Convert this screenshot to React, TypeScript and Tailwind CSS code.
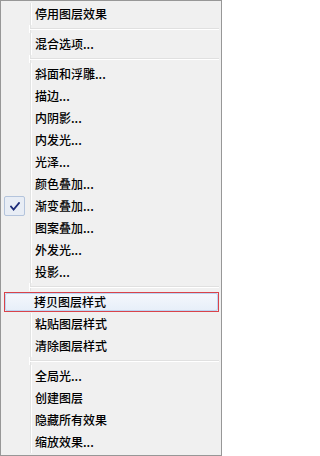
import React from "react";

type Entry = { t: "item"; label: string; checked?: boolean; hot?: boolean } | { t: "sep" };

const entries: Entry[] = [
  { t: "item", label: "停用图层效果" },
  { t: "sep" },
  { t: "item", label: "混合选项..." },
  { t: "sep" },
  { t: "item", label: "斜面和浮雕..." },
  { t: "item", label: "描边..." },
  { t: "item", label: "内阴影..." },
  { t: "item", label: "内发光..." },
  { t: "item", label: "光泽..." },
  { t: "item", label: "颜色叠加..." },
  { t: "item", label: "渐变叠加...", checked: true },
  { t: "item", label: "图案叠加..." },
  { t: "item", label: "外发光..." },
  { t: "item", label: "投影..." },
  { t: "sep" },
  { t: "item", label: "拷贝图层样式", hot: true },
  { t: "item", label: "粘贴图层样式" },
  { t: "item", label: "清除图层样式" },
  { t: "sep" },
  { t: "item", label: "全局光..." },
  { t: "item", label: "创建图层" },
  { t: "item", label: "隐藏所有效果" },
  { t: "item", label: "缩放效果..." },
];

function Check() {
  return (
    <div className="w-[21px] h-[20px] ml-[1px] border border-[#b4c4dc] rounded-[2px] bg-[#e8edf5] flex items-center justify-center">
      <svg width="10" height="9" viewBox="0 0 10 9">
        <path d="M1 4.5 L3.6 7.5 L9 1" fill="none" stroke="#1c2b78" strokeWidth="1.8" strokeLinecap="square" strokeLinejoin="miter" />
      </svg>
    </div>
  );
}

function Item({ label, checked }: { label: string; checked?: boolean }) {
  return (
    <div className="flex h-[22px]">
      <div className="w-[27px] shrink-0 flex items-center">{checked ? <Check /> : null}</div>
      <div className="flex-1 border-l border-l-[#e2e3e3]">
        <div className="h-full border-l border-l-white pl-[3px] flex items-center leading-none">{label}</div>
      </div>
    </div>
  );
}

function HotItem({ label }: { label: string }) {
  return (
    <div className="flex h-[22px] py-[1px] pl-[1px]">
      <div className="flex-1 border border-[#d9434a]">
        <div className="h-full border border-[#bcd5f2] rounded-[2px] bg-gradient-to-b from-[#f4f7fc] to-[#e7eff9] pl-[28px] flex items-center leading-none">
          {label}
        </div>
      </div>
    </div>
  );
}

function Sep() {
  return (
    <div className="flex h-[8px]">
      <div className="w-[27px] shrink-0" />
      <div className="flex-1 border-l border-l-[#e2e3e3]">
        <div className="h-full border-l border-l-white pt-[3px] -ml-[2px]">
          <div className="h-px bg-[#e0e0e0]" />
          <div className="h-px bg-white" />
        </div>
      </div>
    </div>
  );
}

export default function App() {
  return (
    <div className="w-[222px] h-[456px] border border-[#979797] bg-[#f0f0f0] p-[2px] flex flex-col text-[12px] font-medium text-black font-['Noto_Sans_CJK_SC','Noto_Sans',sans-serif]">
      {entries.map((e, i) =>
        e.t === "sep" ? (
          <Sep key={i} />
        ) : e.hot ? (
          <HotItem key={i} label={e.label} />
        ) : (
          <Item key={i} label={e.label} checked={e.checked} />
        )
      )}
    </div>
  );
}
